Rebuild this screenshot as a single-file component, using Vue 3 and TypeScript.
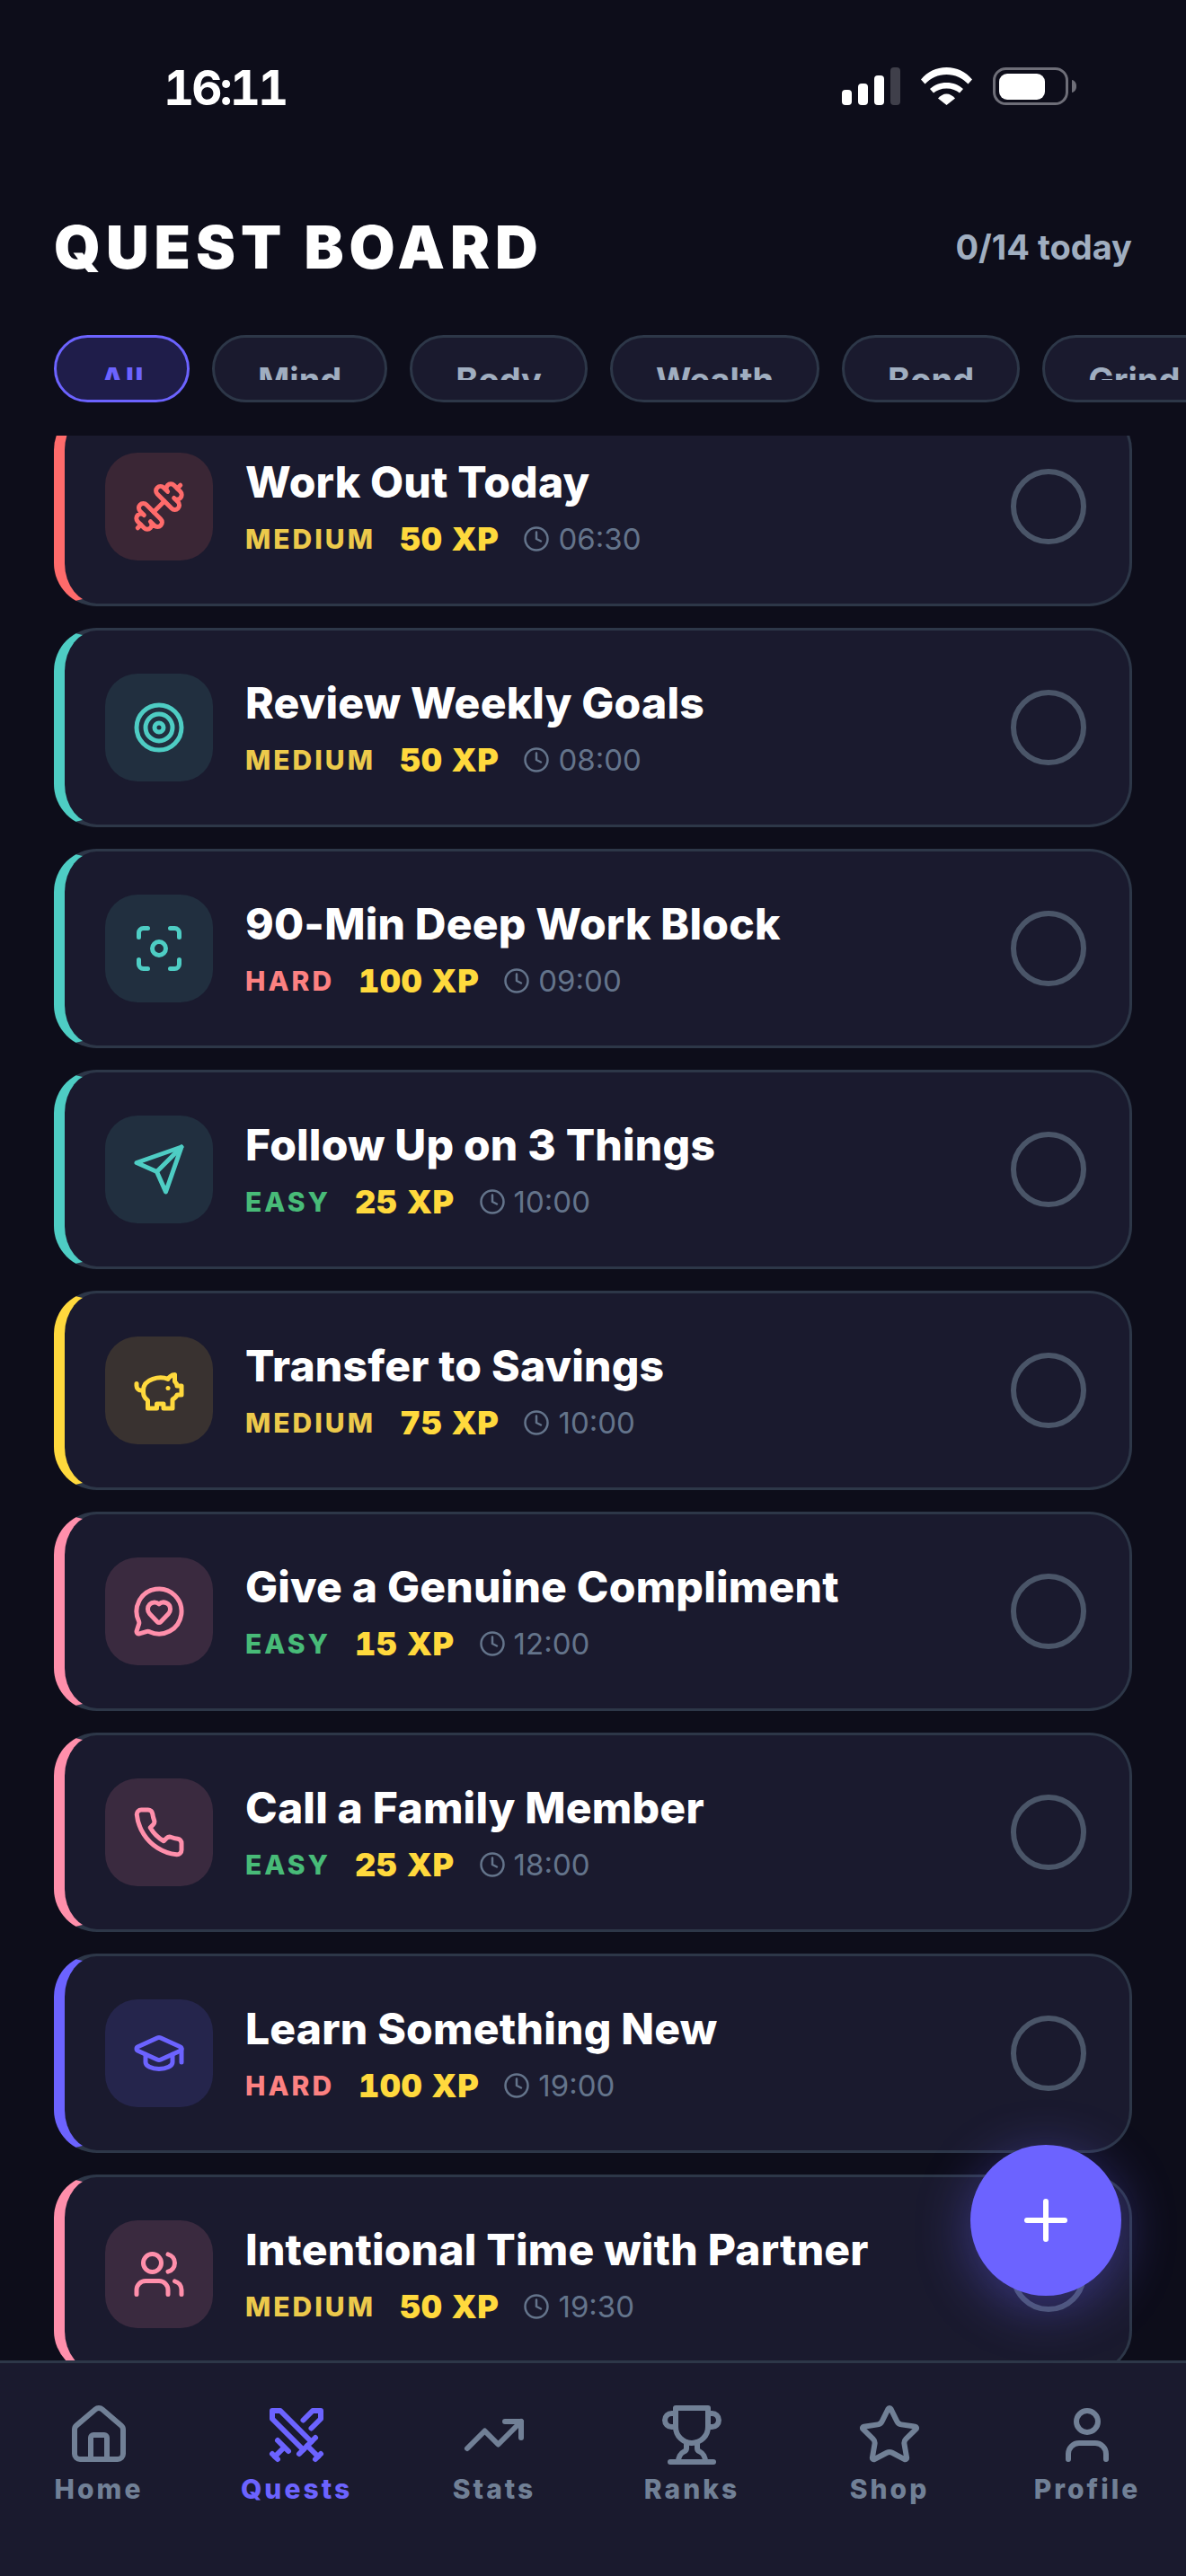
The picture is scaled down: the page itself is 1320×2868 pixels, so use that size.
<script setup lang="ts">
type Shape =
  | { t: 'path'; d: string }
  | { t: 'circle'; cx: number; cy: number; r: number }

const p = (d: string): Shape => ({ t: 'path', d })
const c = (cx: number, cy: number, r: number): Shape => ({ t: 'circle', cx, cy, r })

const icons: Record<string, Shape[]> = {
  dumbbell: [
    p('M17.596 12.768a2 2 0 1 0 2.829-2.829l-1.768-1.767a2 2 0 0 0 2.828-2.829l-2.828-2.828a2 2 0 0 0-2.829 2.828l-1.767-1.768a2 2 0 1 0-2.829 2.829z'),
    p('m2.5 21.5 1.4-1.4'),
    p('m20.1 3.9 1.4-1.4'),
    p('M5.343 21.485a2 2 0 1 0 2.829-2.828l1.767 1.768a2 2 0 1 0 2.829-2.829l-6.364-6.364a2 2 0 1 0-2.829 2.829l1.768 1.767a2 2 0 0 0-2.828 2.829z'),
    p('m9.6 14.4 4.8-4.8'),
  ],
  target: [c(12, 12, 10), c(12, 12, 6), c(12, 12, 2)],
  focus: [
    c(12, 12, 3),
    p('M3 7V5a2 2 0 0 1 2-2h2'),
    p('M17 3h2a2 2 0 0 1 2 2v2'),
    p('M21 17v2a2 2 0 0 1-2 2h-2'),
    p('M7 21H5a2 2 0 0 1-2-2v-2'),
  ],
  send: [p('m22 2-7 20-4-9-9-4Z'), p('M22 2 11 13')],
  piggy: [
    p('M19 5c-1.5 0-2.8 1.4-3 2-3.5-1.5-11-.3-11 5 0 1.8 0 3 2 4.5V20h4v-2h3v2h4v-4c1-.5 1.7-1 2-2h2v-4h-2c0-1-.5-1.5-1-2V5z'),
    p('M2 9v1c0 1.1.9 2 2 2h1'),
    p('M16 11h.01'),
  ],
  heartChat: [
    p('M2.992 16.342a2 2 0 0 1 .094 1.167l-1.065 3.29a1 1 0 0 0 1.236 1.168l3.413-.998a2 2 0 0 1 1.099.092 10 10 0 1 0-4.777-4.719'),
    p('M7.828 13.07A3 3 0 0 1 12 8.764a3 3 0 0 1 5.004 2.224 3 3 0 0 1-.832 2.083l-3.447 3.62a1 1 0 0 1-1.45-.001z'),
  ],
  phone: [
    p('M22 16.92v3a2 2 0 0 1-2.18 2 19.79 19.79 0 0 1-8.63-3.07 19.5 19.5 0 0 1-6-6 19.79 19.79 0 0 1-3.07-8.67A2 2 0 0 1 4.11 2h3a2 2 0 0 1 2 1.72 12.84 12.84 0 0 0 .7 2.81 2 2 0 0 1-.45 2.11L8.09 9.91a16 16 0 0 0 6 6l1.27-1.27a2 2 0 0 1 2.11-.45 12.84 12.84 0 0 0 2.81.7A2 2 0 0 1 22 16.92z'),
  ],
  cap: [
    p('M21.42 10.922a1 1 0 0 0-.019-1.838L12.83 5.18a2 2 0 0 0-1.66 0L2.6 9.08a1 1 0 0 0 0 1.832l8.57 3.908a2 2 0 0 0 1.66 0z'),
    p('M22 10v6'),
    p('M6 12.5V16a6 3 0 0 0 12 0v-3.5'),
  ],
  users: [
    p('M16 21v-2a4 4 0 0 0-4-4H6a4 4 0 0 0-4 4v2'),
    c(9, 7, 4),
    p('M22 21v-2a4 4 0 0 0-3-3.87'),
    p('M16 3.128a4 4 0 0 1 0 7.744'),
  ],
  clock: [c(12, 12, 10), p('M12 6v6l4 2')],
  home: [
    p('M15 21v-8a1 1 0 0 0-1-1h-4a1 1 0 0 0-1 1v8'),
    p('M3 10a2 2 0 0 1 .709-1.528l7-5.999a2 2 0 0 1 2.582 0l7 5.999A2 2 0 0 1 21 10v9a2 2 0 0 1-2 2H5a2 2 0 0 1-2-2z'),
  ],
  swords: [
    p('M14.5 17.5 3 6V3h3l11.5 11.5'),
    p('M13 19l6-6'),
    p('M16 16l4 4'),
    p('M19 21l2-2'),
    p('M14.5 6.5 18 3h3v3l-3.5 3.5'),
    p('M5 14l4 4'),
    p('M7 17l-3 3'),
    p('M3 19l2 2'),
  ],
  trend: [p('M16 7h6v6'), p('m22 7-8.5 8.5-5-5L2 17')],
  trophy: [
    p('M6 9H4.5a2.5 2.5 0 0 1 0-5H6'),
    p('M18 9h1.5a2.5 2.5 0 0 0 0-5H18'),
    p('M4 22h16'),
    p('M10 14.66V17c0 .55-.47.98-.97 1.21C7.85 18.75 7 20.24 7 22'),
    p('M14 14.66V17c0 .55.47.98.97 1.21C16.15 18.75 17 20.24 17 22'),
    p('M18 2H6v7a6 6 0 0 0 12 0V2Z'),
  ],
  star: [
    p('M11.525 2.295a.53.53 0 0 1 .95 0l2.31 4.679a2.123 2.123 0 0 0 1.595 1.16l5.166.756a.53.53 0 0 1 .294.904l-3.736 3.638a2.123 2.123 0 0 0-.611 1.878l.882 5.14a.53.53 0 0 1-.771.56l-4.618-2.428a2.122 2.122 0 0 0-1.973 0L6.396 21.01a.53.53 0 0 1-.77-.56l.881-5.139a2.122 2.122 0 0 0-.611-1.879L2.16 9.795a.53.53 0 0 1 .294-.906l5.165-.755a2.122 2.122 0 0 0 1.597-1.16z'),
  ],
  user: [p('M19 21v-2a4 4 0 0 0-4-4H9a4 4 0 0 0-4 4v2'), c(12, 7, 4)],
}

const filters = ['All', 'Mind', 'Body', 'Wealth', 'Bond', 'Grind']

interface Quest {
  title: string
  icon: string
  tone: string
  level: 'EASY' | 'MEDIUM' | 'HARD'
  xp: number
  time: string
}

const quests: Quest[] = [
  { title: 'Work Out Today', icon: 'dumbbell', tone: 'red', level: 'MEDIUM', xp: 50, time: '06:30' },
  { title: 'Review Weekly Goals', icon: 'target', tone: 'teal', level: 'MEDIUM', xp: 50, time: '08:00' },
  { title: '90-Min Deep Work Block', icon: 'focus', tone: 'teal', level: 'HARD', xp: 100, time: '09:00' },
  { title: 'Follow Up on 3 Things', icon: 'send', tone: 'teal', level: 'EASY', xp: 25, time: '10:00' },
  { title: 'Transfer to Savings', icon: 'piggy', tone: 'yellow', level: 'MEDIUM', xp: 75, time: '10:00' },
  { title: 'Give a Genuine Compliment', icon: 'heartChat', tone: 'pink', level: 'EASY', xp: 15, time: '12:00' },
  { title: 'Call a Family Member', icon: 'phone', tone: 'pink', level: 'EASY', xp: 25, time: '18:00' },
  { title: 'Learn Something New', icon: 'cap', tone: 'violet', level: 'HARD', xp: 100, time: '19:00' },
  { title: 'Intentional Time with Partner', icon: 'users', tone: 'pink', level: 'MEDIUM', xp: 50, time: '19:30' },
]

const tabs = [
  { label: 'Home', icon: 'home' },
  { label: 'Quests', icon: 'swords', active: true },
  { label: 'Stats', icon: 'trend' },
  { label: 'Ranks', icon: 'trophy' },
  { label: 'Shop', icon: 'star' },
  { label: 'Profile', icon: 'user' },
]
</script>

<template>
  <div class="screen">
    <div class="status">
      <span class="clock">16:11</span>
      <div class="status-icons">
        <svg width="65" height="42" viewBox="0 0 65 42">
          <rect x="0" y="25" width="11" height="17" rx="4" fill="#fff" />
          <rect x="18" y="18" width="11" height="24" rx="4" fill="#fff" />
          <rect x="36" y="9" width="11" height="33" rx="4" fill="#fff" />
          <rect x="54" y="0" width="11" height="42" rx="4" fill="#3f3f4a" />
        </svg>
        <svg width="57" height="42" viewBox="0 0 57 42">
          <path d="M0 13.500C7 5 17 0 28.500 0S50 5 57 13.500L52.500 18.500C46 12 38 8 28.500 8S11 12 4.500 18.500Z" fill="#fff" />
          <path d="M10 24C15 19.500 21 17 28.500 17S42 19.500 47 24L43 28.500C39.500 25.500 34.500 23.500 28.500 23.500S17.500 25.500 14 28.500Z" fill="#fff" />
          <path d="M19 34.500C21.500 31.500 25 29.500 28.500 29.500S35.500 31.500 38 34.500L28.500 42Z" fill="#fff" />
        </svg>
        <svg width="93" height="42" viewBox="0 0 93 42">
          <rect x="1.500" y="1.500" width="81" height="39" rx="13" fill="none" stroke="#6e6e78" stroke-width="3" />
          <rect x="7" y="7" width="51" height="29" rx="9" fill="#fff" />
          <path d="M88 14c3 .5 5 3 5 7s-2 6.500-5 7Z" fill="#6e6e78" />
        </svg>
      </div>
    </div>

    <header class="head">
      <h1>QUEST BOARD</h1>
      <span class="count">0/14 today</span>
    </header>

    <div class="filters">
      <div v-for="(f, i) in filters" :key="f" class="pill" :class="{ on: i === 0 }">
        <span class="pill-text">{{ f }}</span>
      </div>
    </div>

    <main class="list">
      <div class="list-inner">
        <article v-for="q in quests" :key="q.title" class="card" :class="q.tone">
          <div class="badge">
            <svg class="ico" width="60" height="60" viewBox="0 0 24 24">
              <template v-for="(s, i) in icons[q.icon]" :key="i">
                <path v-if="s.t === 'path'" :d="s.d" />
                <circle v-else :cx="s.cx" :cy="s.cy" :r="s.r" />
              </template>
            </svg>
          </div>
          <div class="body">
            <div class="title">{{ q.title }}</div>
            <div class="meta">
              <span class="level" :class="q.level.toLowerCase()">{{ q.level }}</span>
              <span class="xp">{{ q.xp }} XP</span>
              <span class="when">
                <svg class="ico" width="30" height="30" viewBox="0 0 24 24">
                  <template v-for="(s, i) in icons.clock" :key="i">
                    <path v-if="s.t === 'path'" :d="s.d" />
                    <circle v-else :cx="s.cx" :cy="s.cy" :r="s.r" />
                  </template>
                </svg>
                {{ q.time }}
              </span>
            </div>
          </div>
          <div class="check"></div>
        </article>
      </div>
    </main>

    <button class="fab" type="button" aria-label="Add quest">
      <svg width="72" height="72" viewBox="0 0 24 24" fill="none" stroke="#fff" stroke-width="2" stroke-linecap="round">
        <path d="M5 12h14" />
        <path d="M12 5v14" />
      </svg>
    </button>

    <nav class="tabs">
      <div v-for="t in tabs" :key="t.label" class="tab" :class="{ on: t.active }">
        <svg class="ico" width="72" height="72" viewBox="0 0 24 24">
          <template v-for="(s, i) in icons[t.icon]" :key="i">
            <path v-if="s.t === 'path'" :d="s.d" />
            <circle v-else :cx="s.cx" :cy="s.cy" :r="s.r" />
          </template>
        </svg>
        <span>{{ t.label }}</span>
      </div>
    </nav>
  </div>
</template>

<style>
body {
  background: #0d0d1a;
}
</style>

<style scoped>
.screen {
  position: relative;
  display: flex;
  flex-direction: column;
  width: 1320px;
  height: 2868px;
  overflow: hidden;
  background: #0d0d1a;
  color: #fff;
  font-family: Inter, 'Liberation Sans', sans-serif;
}

.status {
  display: flex;
  flex: none;
  align-items: center;
  justify-content: space-between;
  height: 192px;
  padding: 0 122px 0 182px;
  box-sizing: border-box;
}
.clock {
  margin-top: 3px;
  font-size: 53px;
  font-weight: 700;
  letter-spacing: -3px;
  font-variant-numeric: tabular-nums;
}
.status-icons {
  display: flex;
  align-items: center;
  gap: 23px;
}

.head {
  display: flex;
  flex: none;
  align-items: center;
  justify-content: space-between;
  height: 78px;
  margin-top: 44px;
  padding: 0 60px;
}
.head h1 {
  margin: 0;
  font-size: 66px;
  font-weight: 900;
  letter-spacing: 6px;
}
.count {
  color: #a0aec0;
  font-size: 38px;
  font-weight: 700;
}

.filters {
  display: flex;
  flex: none;
  gap: 25px;
  height: 75px;
  margin-top: 59px;
  padding-left: 60px;
}
.pill {
  flex: none;
  height: 75px;
  padding: 30px 48px 0;
  box-sizing: border-box;
  border: 3px solid #2d3748;
  border-radius: 38px;
  background: #1a1a2e;
  color: #a0aec0;
  font-size: 38px;
  font-weight: 700;
}
.pill.on {
  border-color: #6c63ff;
  background: #1f1d4a;
  color: #6c63ff;
}
.pill-text {
  display: block;
  height: 17px;
  overflow: hidden;
  line-height: 35px;
}

.list {
  flex: 1;
  min-height: 0;
  margin-top: 37px;
  overflow: hidden;
}
.list-inner {
  display: flex;
  flex-direction: column;
  gap: 24px;
  margin-top: -32px;
  padding: 0 60px;
}
.card {
  display: flex;
  flex: none;
  align-items: center;
  gap: 36px;
  height: 222px;
  padding: 0 48px 0 45px;
  box-sizing: border-box;
  border: 3px solid #2d3748;
  border-left-width: 12px;
  border-radius: 48px;
  background: #1a1a2e;
}
.card.red { border-left-color: #ff6b6b; --tone: #ff6b6b; --soft: #3a2635; }
.card.teal { border-left-color: #4ecdc4; --tone: #4ecdc4; --soft: #212f3f; }
.card.yellow { border-left-color: #ffd93d; --tone: #ffd93d; --soft: #393230; }
.card.pink { border-left-color: #ff8fab; --tone: #ff8fab; --soft: #3a2a3f; }
.card.violet { border-left-color: #6c63ff; --tone: #6c63ff; --soft: #25254c; }

.badge {
  display: flex;
  flex: none;
  align-items: center;
  justify-content: center;
  width: 120px;
  height: 120px;
  border-radius: 36px;
  background: var(--soft);
  color: var(--tone);
}
.ico {
  display: block;
  flex: none;
  fill: none;
  stroke: currentColor;
  stroke-width: 2;
  stroke-linecap: round;
  stroke-linejoin: round;
}
.body {
  flex: 1;
  min-width: 0;
  padding-top: 2px;
}
.title {
  font-size: 48px;
  font-weight: 800;
  letter-spacing: 0.2px;
  line-height: 60px;
  white-space: nowrap;
}
.meta {
  display: flex;
  align-items: center;
  gap: 27px;
  margin-top: 9px;
  height: 48px;
}
.level {
  font-size: 30px;
  font-weight: 800;
  letter-spacing: 3px;
}
.level.easy { color: #48bb78; }
.level.medium { color: #ecc94b; }
.level.hard { color: #fc8181; }
.xp {
  color: #ffd93d;
  font-size: 36px;
  font-weight: 900;
  letter-spacing: 0.5px;
  font-variant-numeric: tabular-nums;
}
.when {
  display: flex;
  align-items: center;
  gap: 9px;
  color: #64748b;
  font-size: 33px;
}
.check {
  flex: none;
  width: 84px;
  height: 84px;
  box-sizing: border-box;
  border: 6px solid #4a5568;
  border-radius: 50%;
}

.fab {
  position: absolute;
  top: 2388px;
  right: 72px;
  display: flex;
  align-items: center;
  justify-content: center;
  width: 168px;
  height: 168px;
  padding: 0;
  border: 0;
  border-radius: 50%;
  background: #6c63ff;
  box-shadow: 0 12px 60px rgba(108, 99, 255, 0.4);
}

.tabs {
  display: flex;
  flex: none;
  height: 240px;
  padding-top: 44px;
  box-sizing: border-box;
  border-top: 3px solid #2d3748;
  background: #1a1a2e;
}
.tab {
  display: flex;
  flex: 1;
  flex-direction: column;
  align-items: center;
  gap: 6px;
  color: #718096;
  font-size: 30px;
  font-weight: 800;
  letter-spacing: 3px;
}
.tab.on {
  color: #6c63ff;
}
</style>
